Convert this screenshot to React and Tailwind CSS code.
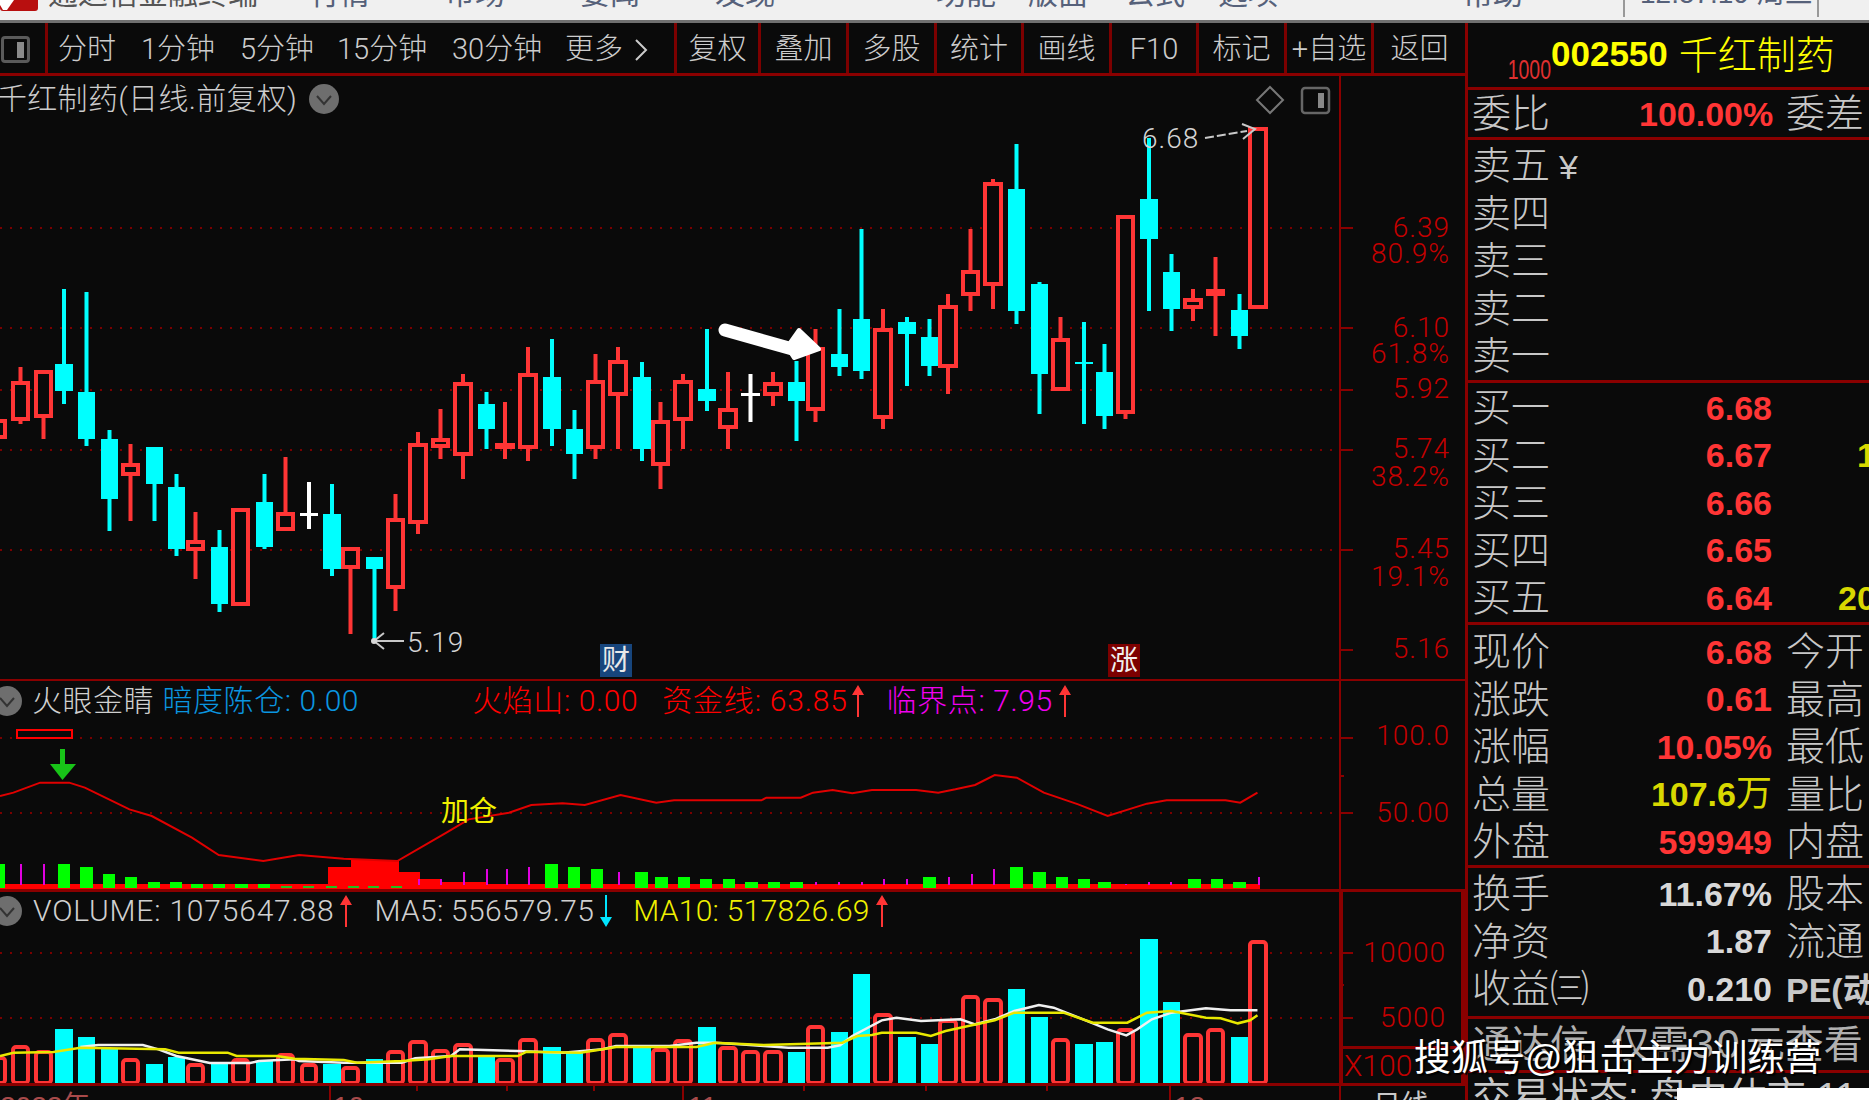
import React from 'react';

const RED = '#ff3535';
const CYAN = '#00ffff';
const BG = '#0a0a0a';

// x0, x1, high, top, bottom, low, kind, volume top
const candles = [
  [-12, 7, 418, 418, 438, 460, 'r', 1055],
  [11, 30, 366, 380, 420, 423, 'r', 1044],
  [34, 53, 369, 369, 417, 438, 'r', 1049],
  [55, 73, 288, 363, 390, 403, 'c', 1028],
  [78, 95, 291, 391, 438, 445, 'c', 1036],
  [101, 118, 429, 438, 498, 530, 'c', 1048],
  [121, 140, 443, 462, 475, 520, 'r', 1057],
  [146, 163, 446, 446, 483, 520, 'c', 1063],
  [168, 185, 473, 486, 548, 555, 'c', 1056],
  [186, 205, 511, 539, 550, 578, 'r', 1062],
  [211, 228, 529, 546, 603, 611, 'c', 1063],
  [231, 250, 507, 507, 605, 605, 'r', 1057],
  [256, 273, 473, 501, 546, 548, 'c', 1060],
  [276, 295, 456, 511, 530, 530, 'r', 1052],
  [300, 318, 481, 512, 515, 528, 'w', 1062],
  [323, 341, 483, 513, 568, 575, 'c', 1063],
  [341, 360, 546, 546, 568, 633, 'r', 1065],
  [366, 383, 556, 556, 568, 640, 'c', 1058],
  [386, 405, 493, 517, 588, 610, 'r', 1049],
  [408, 428, 431, 442, 523, 533, 'r', 1039],
  [431, 450, 408, 437, 447, 458, 'r', 1048],
  [453, 473, 373, 381, 455, 478, 'r', 1042],
  [478, 495, 391, 403, 428, 448, 'c', 1055],
  [495, 515, 401, 442, 448, 458, 'r', 1057],
  [518, 538, 346, 372, 448, 460, 'r', 1037],
  [543, 561, 338, 376, 428, 445, 'c', 1046],
  [566, 583, 409, 428, 453, 478, 'c', 1052],
  [586, 605, 353, 379, 448, 458, 'r', 1037],
  [608, 628, 346, 359, 395, 448, 'r', 1032],
  [633, 651, 361, 376, 448, 460, 'c', 1047],
  [651, 670, 401, 419, 465, 488, 'r', 1047],
  [673, 693, 373, 379, 420, 448, 'r', 1038],
  [698, 716, 328, 388, 400, 410, 'c', 1026],
  [718, 738, 371, 407, 428, 448, 'r', 1045],
  [741, 760, 373, 392, 395, 421, 'w', 1049],
  [763, 783, 371, 381, 395, 405, 'r', 1049],
  [788, 805, 360, 381, 400, 440, 'c', 1051],
  [806, 825, 328, 346, 410, 421, 'r', 1024],
  [831, 848, 308, 353, 366, 375, 'c', 1031],
  [853, 870, 228, 318, 370, 378, 'c', 973],
  [873, 893, 308, 327, 418, 428, 'r', 1012],
  [898, 916, 316, 321, 333, 385, 'c', 1036],
  [921, 938, 318, 336, 365, 375, 'c', 1043],
  [938, 958, 293, 304, 367, 393, 'r', 1018],
  [961, 980, 228, 269, 295, 310, 'r', 994],
  [983, 1003, 178, 181, 285, 308, 'r', 997],
  [1008, 1025, 143, 188, 310, 323, 'c', 988],
  [1031, 1048, 281, 283, 373, 413, 'c', 1016],
  [1051, 1070, 316, 337, 390, 390, 'r', 1037],
  [1075, 1093, 321, 361, 363, 423, 't', 1043],
  [1096, 1113, 343, 371, 415, 428, 'c', 1041],
  [1116, 1135, 214, 214, 413, 418, 'r', 1027],
  [1140, 1158, 137, 198, 238, 310, 'c', 938],
  [1163, 1180, 253, 271, 308, 330, 'c', 1001],
  [1183, 1203, 288, 297, 308, 320, 'r', 1032],
  [1206, 1225, 256, 288, 295, 335, 'r', 1027],
  [1231, 1248, 293, 309, 335, 348, 'c', 1036],
  [1248, 1268, 126, 126, 308, 308, 'r', 939],
];

// traced from crops of the picture
const fromLeft = (pts) => pts.map(([x, y]) => `${x / 2.24},${y / 3 + 680}`).join(' ');
const fromRight = (pts) => pts.map(([x, y]) => `${x / 2.036 + 700},${y / 3 + 680}`).join(' ');

const indicatorLine =
  fromLeft([[0, 345], [30, 335], [90, 305], [155, 305], [190, 320], [290, 385], [340, 405], [430, 470], [490, 522], [590, 540], [670, 522], [770, 533], [890, 540], [1000, 455], [1050, 415], [1140, 395], [1190, 372], [1260, 367], [1310, 372], [1390, 342], [1470, 365], [1510, 358], [1568, 358]]) +
  ' ' +
  fromRight([[125, 358], [135, 350], [205, 350], [230, 335], [270, 327], [310, 337], [350, 327], [440, 327], [485, 335], [520, 325], [560, 312], [600, 282], [645, 290], [700, 335], [770, 370], [830, 405], [910, 368], [950, 358], [1070, 358], [1100, 365], [1135, 335]]);

const whiteLine =
  fromLeft([[180, 1098], [220, 1092], [320, 1092], [355, 1105], [395, 1125], [430, 1135], [470, 1146], [560, 1146], [580, 1140], [660, 1135], [670, 1140], [770, 1145], [900, 1145], [930, 1132], [1010, 1125], [1030, 1105], [1160, 1110], [1260, 1115], [1350, 1105], [1380, 1095], [1500, 1095], [1560, 1085]]) +
  ' ' +
  fromRight([[30, 1085], [80, 1090], [130, 1095], [180, 1100], [260, 1100], [285, 1093], [310, 1065], [370, 1018], [400, 1010], [450, 1020], [530, 1015], [560, 1030], [600, 1015], [640, 990], [690, 972], [720, 980], [780, 1015], [830, 1045], [868, 1063], [890, 1045], [920, 1015], [960, 995], [1030, 982], [1080, 988], [1135, 988]]);

const yellowLine =
  fromLeft([[0, 1125], [30, 1115], [120, 1113], [180, 1100], [370, 1105], [400, 1115], [510, 1115], [530, 1125], [620, 1125], [660, 1133], [770, 1137], [800, 1145], [900, 1140], [960, 1135], [1010, 1125], [1160, 1125], [1180, 1112], [1300, 1115], [1350, 1105], [1380, 1098], [1560, 1098]]) +
  ' ' +
  fromRight([[30, 1085], [130, 1092], [220, 1088], [290, 1085], [320, 1065], [350, 1062], [370, 1055], [440, 1055], [470, 1065], [500, 1050], [530, 1040], [600, 1018], [640, 995], [740, 995], [800, 1025], [870, 1025], [910, 995], [960, 990], [1030, 1010], [1060, 1012], [1095, 1027], [1120, 1018], [1135, 1003]]);

// x, width, top
const greenBars = [
  [0, 5, 863], [58, 12, 863], [80, 13, 866], [103, 12, 873], [125, 12, 876], [148, 12, 881], [170, 12, 881],
  [191, 12, 883], [213, 12, 883], [235, 13, 883], [258, 12, 883], [545, 13, 863], [568, 12, 866], [591, 12, 868],
  [635, 13, 871], [655, 13, 876], [678, 12, 876], [700, 12, 878], [723, 12, 878], [745, 13, 881], [768, 12, 881],
  [790, 13, 881], [923, 13, 876], [1010, 13, 866], [1033, 13, 871], [1056, 12, 876], [1078, 12, 878], [1098, 13, 881],
  [1188, 13, 878], [1211, 12, 878], [1233, 13, 881],
];
const pinkBars = [
  [21, 863], [44, 863], [419, 878], [441, 878], [464, 871], [487, 868], [507, 868], [529, 866], [619, 871],
  [816, 881], [839, 881], [862, 881], [884, 878], [907, 878], [949, 876], [972, 873], [994, 868],
  [1126, 883], [1149, 881], [1171, 881], [1259, 876],
];
const greenDashes = [281, 303, 326, 348, 368, 391];
const redSteps = [
  [328, 23, 866], [351, 48, 859], [399, 21, 871], [420, 22, 878], [442, 45, 881],
];

const Dotted = ({ ys, ticks = [], small = [] }) => (
  <g>
    {ys.map((y) => (
      <line key={y} x1="0" x2="1339" y1={y} y2={y} stroke="#7a0000" strokeWidth="2" strokeDasharray="2 8" />
    ))}
    {[...ys, ...ticks].map((y) => (
      <line key={`t${y}`} x1="1339" x2="1353" y1={y} y2={y} stroke="#8a0000" strokeWidth="2" />
    ))}
    {small.map((y) => (
      <line key={`s${y}`} x1="1339" x2="1344" y1={y} y2={y} stroke="#8a0000" strokeWidth="2" />
    ))}
  </g>
);

const Candle = ({ c }) => {
  const [x0, x1, high, top, bottom, low, kind] = c;
  const mid = (x0 + x1) / 2;
  if (kind === 'w' || kind === 't') {
    const color = kind === 'w' ? '#ffffff' : CYAN;
    return (
      <g>
        <rect x={mid - 2} y={high} width="4" height={low - high} fill={color} />
        <rect x={x0} y={top} width={x1 - x0} height={bottom - top} fill={color} />
      </g>
    );
  }
  if (kind === 'c') {
    return (
      <g>
        <rect x={mid - 2} y={high} width="4" height={low - high} fill={CYAN} />
        <rect x={x0} y={top} width={x1 - x0} height={bottom - top} fill={CYAN} />
      </g>
    );
  }
  return (
    <g>
      <rect x={mid - 2} y={high} width="4" height={low - high} fill={RED} />
      <rect x={x0 + 2} y={top + 2} width={x1 - x0 - 4} height={Math.max(bottom - top - 4, 1)} fill={BG} stroke={RED} strokeWidth="4" />
    </g>
  );
};

const MainChart = () => (
  <svg className="absolute left-0 top-0 w-[1353px] h-[603px]" viewBox="0 75 1353 603">
    <Dotted ys={[227, 327, 389, 449, 549]} ticks={[649]} />
    {candles.map((c) => (
      <Candle key={c[0]} c={c} />
    ))}
    <path d="M725 329 L796 349" stroke="#fff" strokeWidth="13" strokeLinecap="round" />
    <polygon points="799,329 819,348 794,357 787,346" fill="#fff" stroke="#fff" strokeWidth="4" strokeLinejoin="round" />
    <path d="M1205 137 L1247 130" stroke="#c8c8c8" strokeWidth="2" strokeDasharray="9 3" />
    <path d="M1242 123 L1255 128 L1243 138" stroke="#c8c8c8" strokeWidth="2" fill="none" />
    <path d="M404 640 L374 640 M384 632 L374 640 L384 648" stroke="#c8c8c8" strokeWidth="2" fill="none" />
    <circle cx="374" cy="640" r="3" fill="#d8d8d8" />
    <path d="M1270 86 L1283 99 L1270 112 L1257 99 Z" stroke="#777" strokeWidth="2" fill="none" />
    <rect x="1302" y="87" width="27" height="25" rx="3" stroke="#666" strokeWidth="2.5" fill="none" />
    <rect x="1318" y="92" width="6" height="15" fill="#888" />
  </svg>
);

const IndicatorChart = () => (
  <svg className="absolute left-0 top-0 w-[1353px] h-[208px]" viewBox="0 680 1353 208">
    <Dotted ys={[737, 812]} small={[775]} />
    <rect x="17" y="729" width="55" height="8" fill="none" stroke="#ff0000" strokeWidth="2" />
    <path d="M60 748 H65 V763 H76 L62.5 779 L50 763 H60 Z" fill="#18c418" />
    {redSteps.map(([x, w, y]) => (
      <rect key={x} x={x} y={y} width={w} height={888 - y} fill="#ff0000" />
    ))}
    <rect x="0" y="883" width="1260" height="5" fill="#ff0000" />
    {greenBars.map(([x, w, y]) => (
      <rect key={x} x={x} y={y} width={w} height={887 - y} fill="#00ff00" />
    ))}
    {pinkBars.map(([x, y]) => (
      <rect key={x} x={x - 1} y={y} width="2" height={884 - y} fill="#e000e0" />
    ))}
    {greenDashes.map((x) => (
      <rect key={x} x={x} y="885" width="11" height="2" fill="#20c020" />
    ))}
    <polyline points={indicatorLine} fill="none" stroke="#e00000" strokeWidth="2" />
  </svg>
);

const VolumeChart = () => (
  <svg className="absolute left-0 top-0 w-[1353px] h-[191px]" viewBox="0 891 1353 191">
    <Dotted ys={[952, 1017]} small={[984]} />
    {candles.map(([x0, x1, , , , , kind, vol]) =>
      kind === 'c' || kind === 't' ? (
        <rect key={x0} x={x0} y={vol} width={x1 - x0} height={1083 - vol} fill={CYAN} />
      ) : (
        <rect key={x0} x={x0 + 2} y={vol + 2} width={x1 - x0 - 4} height={1080 - vol} rx="3" fill={BG} stroke={RED} strokeWidth="4" />
      ),
    )}
    <polyline points={whiteLine} fill="none" stroke="#f0f0f0" strokeWidth="2.5" />
    <polyline points={yellowLine} fill="none" stroke="#e8e800" strokeWidth="2.5" />
  </svg>
);

const GrayCircle = ({ className }) => (
  <svg className={className} viewBox="0 0 30 30" width="30" height="30">
    <circle cx="15" cy="15" r="15" fill="#6e6e6e" />
    <path d="M8 12 L15 20 L22 12" fill="none" stroke="#333" strokeWidth="2" />
  </svg>
);

const Arrow = ({ color = '#ff3535', down = false, className = '' }) => (
  <svg className={className} width="14" height="32" viewBox="0 0 14 32">
    {down ? (
      <path d="M6 0 H8 V22 H13 L7 32 L1 22 H6 Z" fill={color} />
    ) : (
      <path d="M7 0 L13 10 H8 V32 H6 V10 H1 Z" fill={color} />
    )}
  </svg>
);

const AxisText = ({ className = '', children }) => (
  <div className={`font-['Roboto','Noto_Sans_CJK_SC',sans-serif] font-light tracking-[1px] text-[28px] leading-[28px] text-[#c40000] text-right pr-[15px] ${className}`}>{children}</div>
);

const TitleBar = () => (
  <div className="relative h-[23px] shrink-0 overflow-hidden bg-[#f0f0f0] border-b-[3px] border-[#707070] flex items-start text-[30px] leading-[24px] text-[#56617a]">
    <div className="w-[38px] h-[11px] bg-[#b80f0f] rounded-b-[3px] flex items-start">
      <svg width="16" height="11" viewBox="0 0 16 11">
        <path d="M0 0 H14 L7 10 H3 L0 5 Z" fill="#fff" />
      </svg>
    </div>
    <span className="-mt-[18px] ml-[10px] w-[262px] shrink-0 text-[#555]">通达信金融终端</span>
    <span className="-mt-[18px] w-[135px] shrink-0">行情</span>
    <span className="-mt-[18px] w-[135px] shrink-0">市场</span>
    <span className="-mt-[18px] w-[135px] shrink-0">要闻</span>
    <span className="-mt-[18px] w-[221px] shrink-0">发现</span>
    <span className="-mt-[18px] w-[92px] shrink-0">功能</span>
    <span className="-mt-[18px] w-[97px] shrink-0">版面</span>
    <span className="-mt-[18px] w-[93px] shrink-0">公式</span>
    <span className="-mt-[18px] w-[245px] shrink-0">选项</span>
    <span className="-mt-[18px] w-[160px] shrink-0">帮助</span>
    <div className="h-[17px] w-[2px] shrink-0 bg-[#999]" />
    <span className="-mt-[18px] w-[192px] shrink-0 pl-[15px] text-[28px]">12:57:19 周三</span>
    <div className="h-[17px] w-[2px] shrink-0 bg-[#999]" />
  </div>
);

const ToolCell = ({ className = 'w-[88px]', children }) => (
  <div className={`h-full shrink-0 flex items-center justify-center pt-[3px] border-r-[3px] border-[#7c0000] ${className}`}>{children}</div>
);

const Toolbar = () => (
  <div className="h-[53px] shrink-0 flex border-b-[3px] border-[#8a0000] text-[29px] leading-none text-[#cccccc] font-['Roboto','Noto_Sans_CJK_SC',sans-serif] font-light">
    <ToolCell className="w-[48px] justify-start pl-[1px]">
      <div className="w-[29px] h-[27px] rounded-[4px] border-[3px] border-[#5a5a5a] flex justify-end items-center pr-[3px]">
        <div className="w-[7px] h-[16px] bg-[#8a8a8a]" />
      </div>
    </ToolCell>
    <div className="w-[629px] shrink-0 h-full flex items-center pt-[3px] border-r-[3px] border-[#7c0000] pl-[10px]">
      <span className="w-[83px] shrink-0">分时</span>
      <span className="w-[99px] shrink-0">1分钟</span>
      <span className="w-[97px] shrink-0">5分钟</span>
      <span className="w-[115px] shrink-0">15分钟</span>
      <span className="w-[113px] shrink-0">30分钟</span>
      <span className="shrink-0">更多</span>
      <svg className="ml-[11px]" width="14" height="24" viewBox="0 0 14 24">
        <path d="M2 2 L12 12 L2 22" fill="none" stroke="#cccccc" strokeWidth="2" />
      </svg>
    </div>
    <ToolCell className="w-[84px]">复权</ToolCell>
    <ToolCell>叠加</ToolCell>
    <ToolCell>多股</ToolCell>
    <ToolCell className="w-[87px]">统计</ToolCell>
    <ToolCell>画线</ToolCell>
    <ToolCell className="w-[87px]">F10</ToolCell>
    <ToolCell>标记</ToolCell>
    <ToolCell className="w-[87px]">+自选</ToolCell>
    <div className="h-full flex-1 flex items-center justify-center pt-[3px]">返回</div>
  </div>
);

const MainPanel = () => (
  <div className="h-[605px] shrink-0 flex border-b-[2px] border-[#8a0000]">
    <div className="relative w-[1339px] shrink-0">
      <MainChart />
      <div className="relative h-[46px] flex items-center -ml-[3px] text-[30px] leading-none text-[#cccccc] whitespace-nowrap tracking-[0.3px] font-['Roboto','Noto_Sans_CJK_SC',sans-serif] font-light">
        千红制药(日线.前复权)
        <GrayCircle className="ml-[12px]" />
      </div>
      <span className="absolute left-[1142px] top-[49px] font-['Roboto',sans-serif] font-light tracking-[1px] text-[28px] leading-[28px] text-[#d4d4d4]">6.68</span>
      <span className="absolute left-[407px] top-[553px] font-['Roboto',sans-serif] font-light tracking-[1px] text-[28px] leading-[28px] text-[#d4d4d4]">5.19</span>
      <span className="absolute left-[600px] top-[568px] w-[32px] h-[33px] bg-[#17457c] text-[28px] leading-[33px] text-center text-[#e8e8e8]">财</span>
      <span className="absolute left-[1108px] top-[568px] w-[32px] h-[33px] bg-[#7c0000] text-[28px] leading-[33px] text-center text-[#f0f0f0]">涨</span>
    </div>
    <div className="flex-1 border-l-[2px] border-[#8a0000] pt-[138px]">
      <AxisText>6.39</AxisText>
      <AxisText className="-mt-[2px]">80.9%</AxisText>
      <AxisText className="mt-[46px]">6.10</AxisText>
      <AxisText className="-mt-[2px]">61.8%</AxisText>
      <AxisText className="mt-[7px]">5.92</AxisText>
      <AxisText className="mt-[32px]">5.74</AxisText>
      <AxisText>38.2%</AxisText>
      <AxisText className="mt-[44px]">5.45</AxisText>
      <AxisText>19.1%</AxisText>
      <AxisText className="mt-[44px]">5.16</AxisText>
    </div>
  </div>
);

const IndicatorPanel = () => (
  <div className="h-[211px] shrink-0 flex border-b-[3px] border-[#8a0000]">
    <div className="relative w-[1339px] shrink-0">
      <IndicatorChart />
      <div className="relative h-[40px] flex items-center text-[30px] leading-none whitespace-nowrap tracking-[0.6px] font-['Roboto','Noto_Sans_CJK_SC',sans-serif] font-light">
        <GrayCircle className="-ml-[8px]" />
        <span className="ml-[10px] text-[#d0d0d0]">火眼金睛</span>
        <span className="ml-[8px] text-[#0a96e0]">暗度陈仓: 0.00</span>
        <span className="ml-[113px] text-[#ff0000]">火焰山: 0.00</span>
        <span className="ml-[24px] tracking-[0.8px] text-[#ff0000]">资金线: 63.85</span>
        <Arrow className="ml-[3px]" />
        <span className="ml-[22px] text-[#f000f0]">临界点: 7.95</span>
        <Arrow className="ml-[5px]" />
      </div>
      <span className="absolute left-[441px] top-[117px] text-[28px] leading-none text-[#f0f000]">加仓</span>
    </div>
    <div className="flex-1 border-l-[2px] border-[#8a0000] pt-[41px]">
      <AxisText>100.0</AxisText>
      <AxisText className="mt-[49px]">50.00</AxisText>
    </div>
  </div>
);

const VolumePanel = () => (
  <div className="h-[194px] shrink-0 flex border-b-[3px] border-[#8a0000]">
    <div className="relative w-[1339px] shrink-0">
      <VolumeChart />
      <div className="relative h-[37px] flex items-center text-[30px] leading-none whitespace-nowrap font-['Roboto','Noto_Sans_CJK_SC',sans-serif] font-light">
        <GrayCircle className="-ml-[8px]" />
        <span className="ml-[11px] tracking-[0.8px] text-[#d0d0d0]">VOLUME: 1075647.88</span>
        <Arrow className="ml-[5px]" />
        <span className="ml-[21px] tracking-[0.3px] text-[#d0d0d0]">MA5: 556579.75</span>
        <Arrow color="#00e5ff" down className="ml-[5px]" />
        <span className="ml-[20px] tracking-[0.3px] text-[#f0f000]">MA10: 517826.69</span>
        <Arrow className="ml-[5px]" />
      </div>
    </div>
    <div className="flex-1 flex flex-col border-x-[4px] border-[#8a0000] pt-[47px]">
      <AxisText className="pr-[11px]">10000</AxisText>
      <AxisText className="mt-[37px] pr-[11px]">5000</AxisText>
      <div className="mt-auto h-[37px] border-t-[3px] border-[#8a0000] font-['Roboto',sans-serif] font-light text-[30px] leading-[34px] text-[#c40000] pl-[1px]">X100</div>
    </div>
  </div>
);

const DateAxis = () => (
  <div className="relative flex-1 min-h-0 overflow-hidden flex text-[28px] leading-[28px] text-[#a84a4a]">
    <svg className="absolute left-0 top-0 w-[1339px] h-[15px]" viewBox="0 0 1339 15">
      {[417, 507, 594, 804, 926, 1047].map((x) => (
        <line key={x} x1={x} x2={x} y1="0" y2="5" stroke="#8a0000" strokeWidth="2" />
      ))}
      {[330, 683, 1170].map((x) => (
        <line key={x} x1={x} x2={x} y1="0" y2="15" stroke="#8a0000" strokeWidth="2" />
      ))}
    </svg>
    <span className="w-[333px] shrink-0 pt-[7px]">2022年</span>
    <span className="w-[355px] shrink-0 pt-[7px]">10</span>
    <span className="w-[486px] shrink-0 pt-[7px]">11</span>
    <span className="w-[165px] shrink-0 pt-[7px]">12</span>
    <div className="flex-1 border-l-[2px] border-[#8a0000] pl-[32px] pt-[6px] text-[#c8c8c8]">日线</div>
  </div>
);

const Row = ({ label, value, tone = 'text-[#ff3535]', label2, last, lastPad = 'pl-[85px]' }) => (
  <div className="h-[47.5px] flex items-center whitespace-nowrap">
    <span className="w-[171px] shrink-0 pl-[4px] text-[39px] leading-none text-[#c8c8c8] font-light">{label}</span>
    <span className={`w-[133px] shrink-0 text-right text-[34px] leading-none font-bold ${tone}`}>{value}</span>
    {label2 && <span className="pl-[14px] text-[39px] leading-none text-[#c8c8c8] font-light">{label2}</span>}
    {last && <span className={`text-[34px] leading-none font-bold text-[#d8d800] ${lastPad}`}>{last}</span>}
  </div>
);

const SidePanel = () => (
  <div className="w-[401px] shrink-0 flex flex-col overflow-hidden">
    <div className="h-[67px] shrink-0 flex items-center border-b-[3px] border-[#8a0000] whitespace-nowrap">
      <span className="w-[83px] shrink-0 self-end pb-[3px] text-right text-[27px] leading-none text-[#e03030] origin-right scale-x-[0.72]">1000</span>
      <span className="-mt-[4px] text-[35px] leading-none font-bold text-[#ffff00]">002550</span>
      <span className="ml-[11px] text-[39px] leading-none text-[#ffff00] font-light">千红制药</span>
    </div>
    <div className="h-[50px] shrink-0 flex items-center border-b-[3px] border-[#8a0000]">
      <Row label="委比" value="100.00%" label2="委差" />
    </div>
    <div className="h-[243px] shrink-0 pt-[2px] border-b-[3px] border-[#8a0000]">
      <Row label={<>卖五<span className="ml-[9px] text-[34px]">¥</span></>} />
      <Row label="卖四" />
      <Row label="卖三" />
      <Row label="卖二" />
      <Row label="卖一" />
    </div>
    <div className="h-[242px] shrink-0 pt-[1px] border-b-[3px] border-[#8a0000]">
      <Row label="买一" value="6.68" />
      <Row label="买二" value="6.67" last="1" />
      <Row label="买三" value="6.66" />
      <Row label="买四" value="6.65" />
      <Row label="买五" value="6.64" last="20" lastPad="pl-[66px]" />
    </div>
    <div className="h-[243px] shrink-0 pt-[3px] border-b-[3px] border-[#8a0000]">
      <Row label="现价" value="6.68" label2="今开" />
      <Row label="涨跌" value="0.61" label2="最高" />
      <Row label="涨幅" value="10.05%" label2="最低" />
      <Row label="总量" value={<>107.6<span className="text-[36px] font-normal">万</span></>} tone="text-[#d8d800]" label2="量比" />
      <Row label="外盘" value="599949" label2="内盘" />
    </div>
    <div className="h-[151px] shrink-0 pt-[2px] border-b-[3px] border-[#8a0000]">
      <Row label="换手" value="11.67%" tone="text-[#d8d8d8]" label2="股本" />
      <Row label="净资" value="1.87" tone="text-[#d8d8d8]" label2="流通" />
      <Row label="收益㈢" value="0.210" tone="text-[#d8d8d8]" label2={<span className="font-bold text-[34px]">PE(动</span>} />
    </div>
    <div className="h-[54px] shrink-0 pl-[4px] flex items-center border-b-[3px] border-[#8a0000] text-[39px] leading-none text-[#b0b0b0] whitespace-nowrap">
      通达信<span className="ml-[22px]">仅需</span><span className="ml-[2px] tracking-[3px] text-[41px]">30</span><span className="ml-[3px]">元查看</span>
    </div>
    <div className="flex-1 pl-[4px] pt-[4px] text-[39px] leading-none text-[#c8c8c8] whitespace-nowrap">交易状态: 盘中休市 11:30</div>
  </div>
);

const App = () => (
  <div className="relative w-[1869px] h-[1100px] overflow-hidden flex flex-col bg-[#0a0a0a] font-['Liberation_Sans','Noto_Sans_CJK_SC',sans-serif]">
    <TitleBar />
    <div className="flex-1 min-h-0 flex">
      <div className="w-[1468px] shrink-0 flex flex-col border-r-[3px] border-[#8a0000]">
        <Toolbar />
        <MainPanel />
        <IndicatorPanel />
        <VolumePanel />
        <DateAxis />
      </div>
      <SidePanel />
    </div>
    <div className="absolute right-0 bottom-0 w-[192px] h-[12px] bg-white" />
    <div className="absolute left-[1414px] top-[1040px] text-[37px] leading-[38px] text-white whitespace-nowrap [text-shadow:2px_2px_1px_#000]">
      搜狐号@狙击主力训练营
    </div>
  </div>
);

export default App;
